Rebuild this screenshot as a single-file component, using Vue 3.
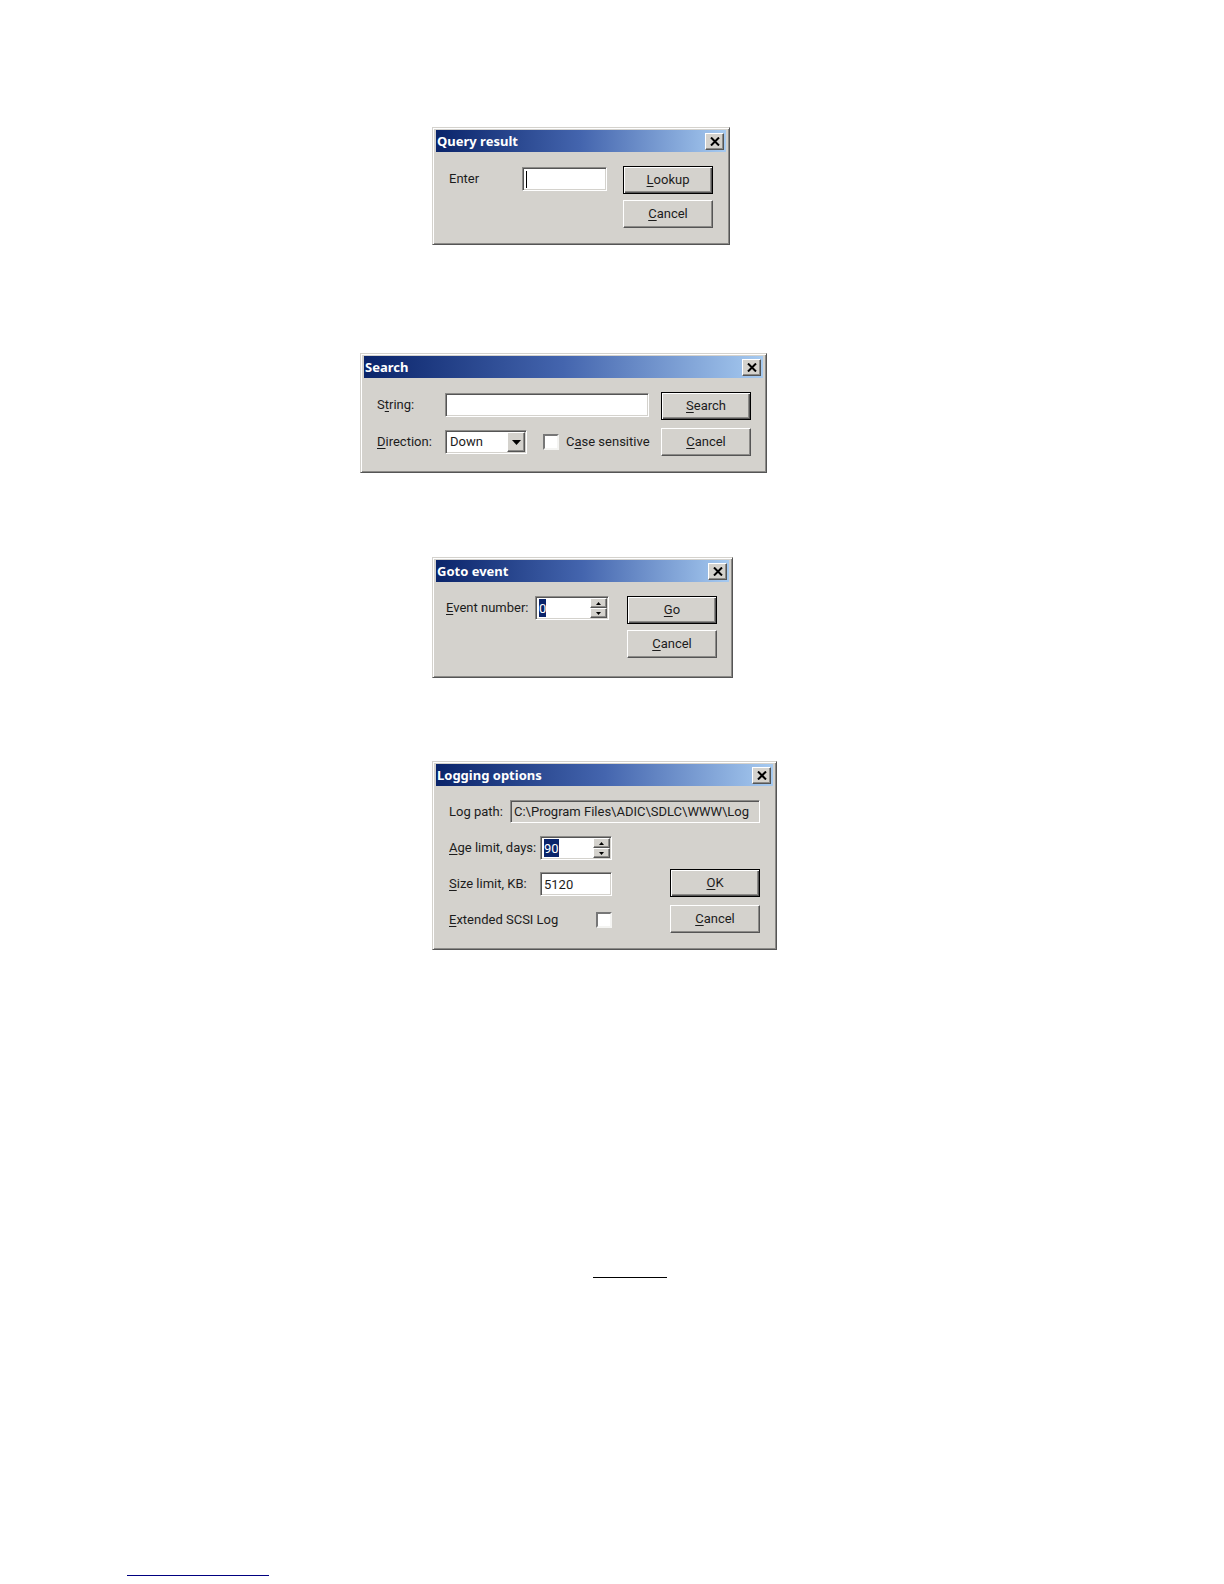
<template>
  <main class="page">
    <form class="dialog query" @submit.prevent>
      <header class="title-bar">
        <h2>Query result</h2>
        <button type="button" class="close" aria-label="Close">
          <svg viewBox="0 0 10 9"><path d="M1 0.5L9 8.5M9 0.5L1 8.5" /></svg>
        </button>
      </header>
      <div class="body">
        <div class="fields">
          <div class="row">
            <label for="enter">Enter</label>
            <div class="box">
              <span class="caret"></span>
              <input id="enter" v-model="query" type="text">
            </div>
          </div>
        </div>
        <div class="buttons">
          <button type="submit" class="btn default"><u>L</u>ookup</button>
          <button type="button" class="btn"><u>C</u>ancel</button>
        </div>
      </div>
    </form>

    <form class="dialog search" @submit.prevent>
      <header class="title-bar">
        <h2>Search</h2>
        <button type="button" class="close" aria-label="Close">
          <svg viewBox="0 0 10 9"><path d="M1 0.5L9 8.5M9 0.5L1 8.5" /></svg>
        </button>
      </header>
      <div class="body">
        <div class="fields">
          <div class="row">
            <label for="string">S<u>t</u>ring:</label>
            <div class="box wide">
              <input id="string" v-model="searchText" type="text">
            </div>
          </div>
          <div class="row">
            <label for="direction"><u>D</u>irection:</label>
            <div class="box combo">
              <select id="direction" v-model="direction">
                <option>Down</option>
                <option>Up</option>
              </select>
              <span class="drop">
                <svg viewBox="0 0 9 5"><path d="M0 0H9L4.5 5Z" /></svg>
              </span>
            </div>
            <input id="case" v-model="caseSensitive" type="checkbox">
            <label for="case" class="check-label">C<u>a</u>se sensitive</label>
          </div>
        </div>
        <div class="buttons">
          <button type="submit" class="btn default"><u>S</u>earch</button>
          <button type="button" class="btn"><u>C</u>ancel</button>
        </div>
      </div>
    </form>

    <form class="dialog goto" @submit.prevent>
      <header class="title-bar">
        <h2>Goto event</h2>
        <button type="button" class="close" aria-label="Close">
          <svg viewBox="0 0 10 9"><path d="M1 0.5L9 8.5M9 0.5L1 8.5" /></svg>
        </button>
      </header>
      <div class="body">
        <div class="fields">
          <div class="row">
            <label for="event"><u>E</u>vent number:</label>
            <div class="box">
              <input id="event" v-model="eventNumber" type="text" class="selected">
              <div class="spin">
                <button type="button" aria-label="Increase"><svg viewBox="0 0 5 3"><path d="M0 3H5L2.5 0Z" /></svg></button>
                <button type="button" aria-label="Decrease"><svg viewBox="0 0 5 3"><path d="M0 0H5L2.5 3Z" /></svg></button>
              </div>
            </div>
          </div>
        </div>
        <div class="buttons">
          <button type="submit" class="btn default"><u>G</u>o</button>
          <button type="button" class="btn"><u>C</u>ancel</button>
        </div>
      </div>
    </form>

    <form class="dialog logging" @submit.prevent>
      <header class="title-bar">
        <h2>Logging options</h2>
        <button type="button" class="close" aria-label="Close">
          <svg viewBox="0 0 10 9"><path d="M1 0.5L9 8.5M9 0.5L1 8.5" /></svg>
        </button>
      </header>
      <div class="body">
        <div class="row path-row">
          <label for="path">Log path:</label>
          <div class="box readonly">
            <input id="path" :value="logPath" type="text" readonly>
          </div>
        </div>
        <div class="fields">
          <div class="row">
            <label for="age"><u>A</u>ge limit, days:</label>
            <div class="box">
              <input id="age" v-model="ageLimit" type="text" class="selected">
              <div class="spin">
                <button type="button" aria-label="Increase"><svg viewBox="0 0 5 3"><path d="M0 3H5L2.5 0Z" /></svg></button>
                <button type="button" aria-label="Decrease"><svg viewBox="0 0 5 3"><path d="M0 0H5L2.5 3Z" /></svg></button>
              </div>
            </div>
          </div>
          <div class="row">
            <label for="size"><u>S</u>ize limit, KB:</label>
            <div class="box">
              <input id="size" v-model="sizeLimit" type="text">
            </div>
          </div>
          <div class="row check-row">
            <label for="extended"><u>E</u>xtended SCSI Log</label>
            <input id="extended" v-model="extendedLog" type="checkbox">
          </div>
        </div>
        <div class="buttons">
          <button type="submit" class="btn default"><u>O</u>K</button>
          <button type="button" class="btn"><u>C</u>ancel</button>
        </div>
      </div>
    </form>

    <hr class="rule">
    <hr class="rule footer-rule">
  </main>
</template>

<script setup>
import { ref } from "vue";

const query = ref("");
const searchText = ref("");
const direction = ref("Down");
const caseSensitive = ref(false);
const eventNumber = ref("0");
const logPath = "C:\\Program Files\\ADIC\\SDLC\\WWW\\Log";
const ageLimit = ref("90");
const sizeLimit = ref("5120");
const extendedLog = ref(false);
</script>

<style>
body {
  margin: 0;
  background: #fff;
}
</style>

<style scoped>
* {
  box-sizing: border-box;
}

.page {
  display: flex;
  flex-direction: column;
  align-items: flex-start;
  padding: 127px 0 8px;
  font-family: Roboto, "Liberation Sans", sans-serif;
  font-size: 13px;
  line-height: 16px;
  color: #1c1c1c;
}

.dialog {
  margin-left: 432px;
  padding: 2px 3px 3px;
  background: #d4d2cd;
  border: 1px solid;
  border-color: #d4d2cd #555 #555 #d4d2cd;
  box-shadow: inset 1px 1px #fff, inset -1px -1px #8c8b88;
}

.query {
  width: 298px;
}

.search {
  width: 407px;
  margin-top: 108px;
  margin-left: 360px;
}

.goto {
  width: 301px;
  margin-top: 84px;
}

.logging {
  width: 345px;
  margin-top: 83px;
}

.title-bar {
  display: flex;
  align-items: center;
  justify-content: space-between;
  height: 22px;
  padding: 0 2px 0 1px;
  background: linear-gradient(90deg, #0a246a, #4465ae 50%, #a6caf0);
}

.title-bar h2 {
  margin: 0;
  font-family: "Noto Sans", sans-serif;
  font-size: 13px;
  line-height: 20px;
  font-weight: 700;
  color: #fff;
}

button {
  padding: 0;
  font: inherit;
  color: inherit;
  background: #d4d2cd;
  border: 1px solid;
  border-color: #fff #555 #555 #fff;
  box-shadow: inset -1px -1px #8c8b88;
}

.close {
  display: flex;
  align-items: center;
  justify-content: center;
  width: 19px;
  height: 17px;
}

.close svg {
  width: 10px;
  height: 9px;
  stroke: #000;
  stroke-width: 2;
}

.body {
  display: flex;
  justify-content: space-between;
  padding: 14px 13px 13px;
}

.search .body {
  padding-right: 12px;
}

.goto .body {
  padding: 14px 12px 16px 10px;
}

.fields {
  display: flex;
  flex-direction: column;
}

.row {
  display: flex;
  align-items: center;
}

.row label {
  white-space: nowrap;
}

.box {
  display: flex;
  align-items: center;
  height: 24px;
  padding: 1px;
  background: #fff;
  border: 1px solid;
  border-color: #8c8b88 #fff #fff #8c8b88;
  box-shadow: inset 1px 1px #555, inset -1px -1px #d4d2cd;
}

.box input,
.box select {
  flex: 1;
  min-width: 0;
  height: 18px;
  padding: 0 2px;
  font: inherit;
  color: inherit;
  background: transparent;
  border: 0;
  outline: 0;
  appearance: none;
}

.box select {
  padding: 0 3px;
}

.box .selected {
  flex: none;
  field-sizing: content;
  margin-left: 2px;
  padding: 0;
  color: #fff;
  background: #0a246a;
}

.caret {
  width: 1px;
  height: 17px;
  margin-left: 2px;
  background: #000;
}

.spin {
  display: flex;
  flex-direction: column;
  width: 17px;
  height: 20px;
  margin-left: auto;
}

.spin button {
  display: flex;
  flex: 1;
  align-items: center;
  justify-content: center;
}

.spin svg {
  width: 5px;
  height: 3px;
}

.drop {
  display: flex;
  align-items: center;
  justify-content: center;
  width: 18px;
  height: 20px;
  background: #d4d2cd;
  border: 1px solid;
  border-color: #fff #555 #555 #fff;
  box-shadow: inset -1px -1px #8c8b88;
  pointer-events: none;
}

.drop svg {
  width: 9px;
  height: 5px;
}

input[type="checkbox"] {
  width: 16px;
  height: 16px;
  margin: 0;
  background: #fff;
  border: 2px solid;
  border-color: #777 #f4f4f2 #f4f4f2 #777;
  appearance: none;
}

input[type="checkbox"]:checked {
  background: #0a246a;
}

.buttons {
  display: flex;
  flex-direction: column;
  gap: 6px;
  width: 90px;
}

.btn {
  height: 28px;
}

.btn.default {
  border-color: #000;
  box-shadow: inset 1px 1px #fff, inset -1px -1px #555, inset -2px -2px #8c8b88;
}

u {
  text-underline-offset: 2px;
}

.query .fields {
  padding-top: 1px;
}

.query .row label {
  width: 73px;
}

.query .box {
  width: 85px;
}

.search .fields {
  gap: 13px;
  padding-top: 1px;
}

.search .row label {
  width: 68px;
}

.search .box.wide {
  width: 204px;
}

.search .combo {
  width: 82px;
  margin-right: 16px;
}

.search .row .check-label {
  width: auto;
  margin-left: 7px;
}

.search .buttons,
.logging .buttons {
  gap: 8px;
}

.goto .row label {
  width: 89px;
}

.goto .box {
  width: 74px;
}

.logging .body {
  flex-wrap: wrap;
  row-gap: 13px;
}

.path-row {
  width: 100%;
}

.path-row label {
  width: 61px;
}

.logging .fields {
  gap: 12px;
  padding-bottom: 1px;
}

.logging .fields label {
  width: 91px;
}

.logging .fields .box {
  width: 72px;
}

.logging .check-row {
  justify-content: space-between;
  height: 24px;
}

.logging .readonly {
  flex: 1;
  height: 23px;
  background: #d4d2cd;
}

.logging .buttons {
  justify-content: flex-end;
}

.rule {
  width: 74px;
  margin: 327px 0 0 593px;
  border: 0;
  border-top: 1px solid #000;
}

.footer-rule {
  width: 142px;
  margin: 297px 0 0 127px;
  border-color: #000080;
}
</style>
